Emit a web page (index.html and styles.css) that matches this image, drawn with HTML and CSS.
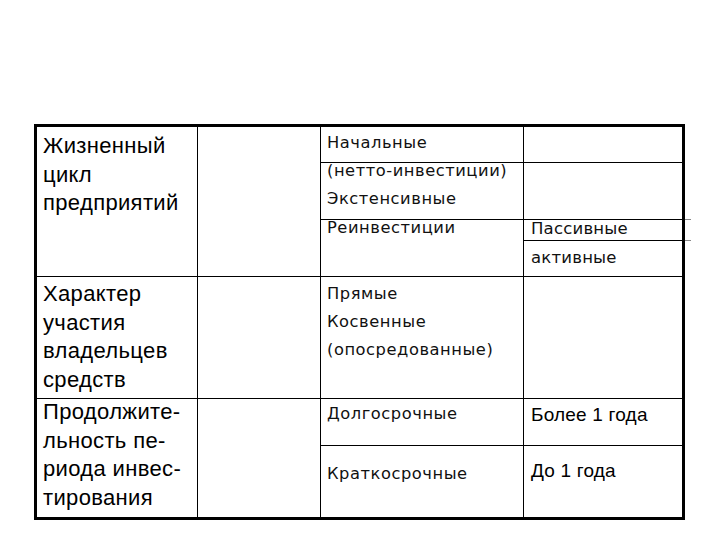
FILE: index.html
```html
<!DOCTYPE html>
<html lang="ru">
<head>
<meta charset="utf-8">
<link rel="stylesheet" href="styles.css">
</head>
<body>
<div class="table">
  <div class="cell head r1">Жизненный<br>цикл<br>предприятий</div>
  <div class="cell c2 r1span"></div>
  <div class="cell c3 t-nach">Начальные</div>
  <div class="cell c4 g1"></div>
  <div class="cell c3 t-shift"><span class="lift">(нетто-инвестиции)<br>Экстенсивные</span></div>
  <div class="cell c4 g2"></div>
  <div class="cell c3 t-rein"><span class="lift">Реинвестиции</span></div>
  <div class="cell c4 t-pass ext">Пассивные</div>
  <div class="cell c4 t-act">активные</div>

  <div class="cell head r2">Характер<br>участия<br>владельцев<br>средств</div>
  <div class="cell c2 r2"></div>
  <div class="cell c3 t-pr">Прямые<br>Косвенные<br>(опосредованные)</div>
  <div class="cell c4 r2"></div>

  <div class="cell head r3"><span class="lift1">Продолжите-<br>льность пе-<br>риода инвес-<br>тирования</span></div>
  <div class="cell c2 r3"></div>
  <div class="cell c3 t-long">Долгосрочные</div>
  <div class="cell c4 big t-more">Более 1 года</div>
  <div class="cell c3 t-short">Краткосрочные</div>
  <div class="cell c4 big t-less">До 1 года</div>
</div>
</body>
</html>
```
FILE: styles.css
```css
html, body {
  margin: 0;
  padding: 0;
  background: #fff;
}
body {
  font-family: "Liberation Sans", Arial, sans-serif;
  color: #000;
}
.table {
  box-sizing: border-box;
  margin: 124px 0 0 34px;
  width: 651px;
  display: grid;
  grid-template-columns: 160px 122px 202px 158px;
  grid-template-rows: 35px 56px 20px 35px 121px 46px 71px;
  gap: 1px;
  background: #000;
  border: 3px solid #000;
}
.cell {
  background: #fff;
  position: relative;
  font-size: 16.5px;
  line-height: 28px;
  white-space: nowrap;
}
.c2 { grid-column: 2; }
.c3 {
  grid-column: 3;
  padding-left: 6px;
  font-family: "DejaVu Sans", "Liberation Sans", sans-serif;
  font-size: 16.3px;
  letter-spacing: 0.55px;
  color: #111;
}
.c4 {
  grid-column: 4;
  padding-left: 7px;
  font-family: "DejaVu Sans", "Liberation Sans", sans-serif;
  font-size: 16.5px;
  letter-spacing: 0.2px;
  color: #111;
}
.head {
  grid-column: 1;
  padding-left: 6px;
  font-size: 22px;
  letter-spacing: 0.35px;
  line-height: 28.7px;
}
.r1 { grid-row: 1 / 5; padding-top: 5px; }
.r1span { grid-row: 1 / 5; }
.r2 { grid-row: 5; }
.head.r2 { padding-top: 3px; }
.r3 { grid-row: 6 / 8; }
.head.r3 { padding-top: 0; }
.lift1 { display: block; margin-top: -1px; }

.t-nach { grid-row: 1; padding-top: 2px; }
.g1 { grid-row: 1; }
.t-shift { grid-row: 2; }
.g2 { grid-row: 2; }
.t-rein { grid-row: 3 / 5; }
.lift { display: block; margin-top: -6px; }
.t-pass { grid-row: 3; line-height: 14px; padding-top: 2px; }
.t-act { grid-row: 4; padding-top: 3px; }
.ext::after,
.ext::before {
  content: "";
  position: absolute;
  left: calc(100% + 3px);
  width: 6px;
  height: 1px;
  background: #888;
}
.ext::before { top: -1px; }
.ext::after { bottom: -1px; }

.t-pr { grid-row: 5; padding-top: 3px; }
.t-long { grid-row: 6; padding-top: 1px; }
.t-short { grid-row: 7; padding-top: 14px; }
.big {
  font-family: "Liberation Sans", Arial, sans-serif;
  font-size: 19px;
  letter-spacing: 0.2px;
  color: #000;
}
.t-more { grid-row: 6; padding-top: 2px; }
.t-less { grid-row: 7; padding-top: 11px; }
```
